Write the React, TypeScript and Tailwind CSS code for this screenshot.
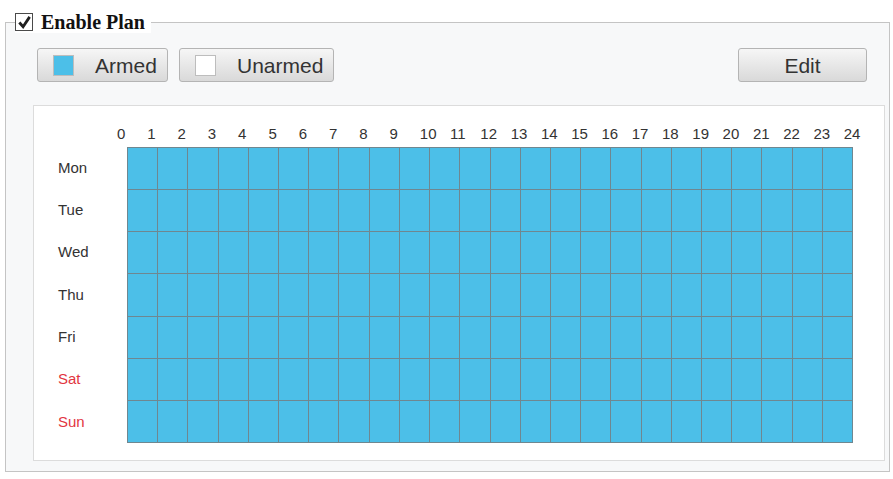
const days = ['Mon', 'Tue', 'Wed', 'Thu', 'Fri', 'Sat', 'Sun'];
const hours = Array.from({ length: 25 }, (_, i) => i);

function PlanButton({ label, swatch, width }: { label: string; swatch: string; width: string }) {
  return (
    <button
      className={`flex h-[34px] items-center rounded-[3px] border border-[#b4b4b4] bg-gradient-to-b from-[#f6f6f6] to-[#d9d9d9] pl-[15px] text-[21px] leading-none whitespace-nowrap text-[#333] ${width}`}
    >
      <span className={`mr-[21px] h-[21px] w-[21px] shrink-0 border border-[#bdbdbd] ${swatch}`} />
      {label}
    </button>
  );
}

export default function App() {
  return (
    <div className="h-[479px] w-[893px] bg-white pt-[11px] pl-[5px] font-['Liberation_Sans',Arial,sans-serif]">
      <fieldset className="h-[461px] w-[885px] border border-[#c4c4c4] bg-[#f7f8f9]">
        <legend className="ml-[9px] flex h-[22px] items-center gap-[8px] bg-white pr-[6px]">
          <span className="flex h-[18px] w-[18px] items-center justify-center border border-[#4a4a4a] bg-white">
            <svg viewBox="0 0 16 16" className="h-[15px] w-[15px]">
              <path d="M2.5 8 L6.5 12.5 L13.5 2" fill="none" stroke="#1f1f1f" strokeWidth="3" />
            </svg>
          </span>
          <span className="font-['Liberation_Serif','Times_New_Roman',serif] text-[20px] font-bold leading-none text-[#111]">
            Enable Plan
          </span>
        </legend>

        <div className="mt-[15px] flex items-center pr-[22px] pl-[31px]">
          <div className="flex gap-[11px]">
            <PlanButton label="Armed" swatch="bg-[#4cbfe8]" width="w-[131px]" />
            <PlanButton label="Unarmed" swatch="bg-white" width="w-[155px]" />
          </div>
          <button className="ml-auto flex h-[34px] w-[129px] items-center justify-center rounded-[3px] border border-[#b4b4b4] bg-gradient-to-b from-[#f6f6f6] to-[#d9d9d9] text-[21px] leading-none text-[#333]">
            Edit
          </button>
        </div>

        <div className="mt-[23px] ml-[27px] h-[356px] w-[852px] border border-[#dcdcdc] bg-white">
          <div className="ml-[83px] grid h-[41px] w-[757px] grid-cols-[repeat(25,minmax(0,1fr))] items-end pb-[6px]">
            {hours.map((h) => (
              <span key={h} className="text-[15px] leading-none text-[#333]">
                {h}
              </span>
            ))}
          </div>
          <div className="flex">
            <div className="flex w-[93px] flex-col">
              {days.map((d, i) => (
                <div
                  key={d}
                  className={`flex h-[42.3px] items-center pl-[24px] text-[15px] ${i >= 5 ? 'text-[#e2363f]' : 'text-[#333]'}`}
                >
                  {d}
                </div>
              ))}
            </div>
            <div className="grid h-[296px] w-[726px] grid-cols-[repeat(24,minmax(0,1fr))] grid-rows-7 gap-px border border-[#6f8790] bg-[#6f8790]">
              {Array.from({ length: 24 * 7 }, (_, i) => (
                <div key={i} className="bg-[#4cbfe8]" />
              ))}
            </div>
          </div>
        </div>
      </fieldset>
    </div>
  );
}
